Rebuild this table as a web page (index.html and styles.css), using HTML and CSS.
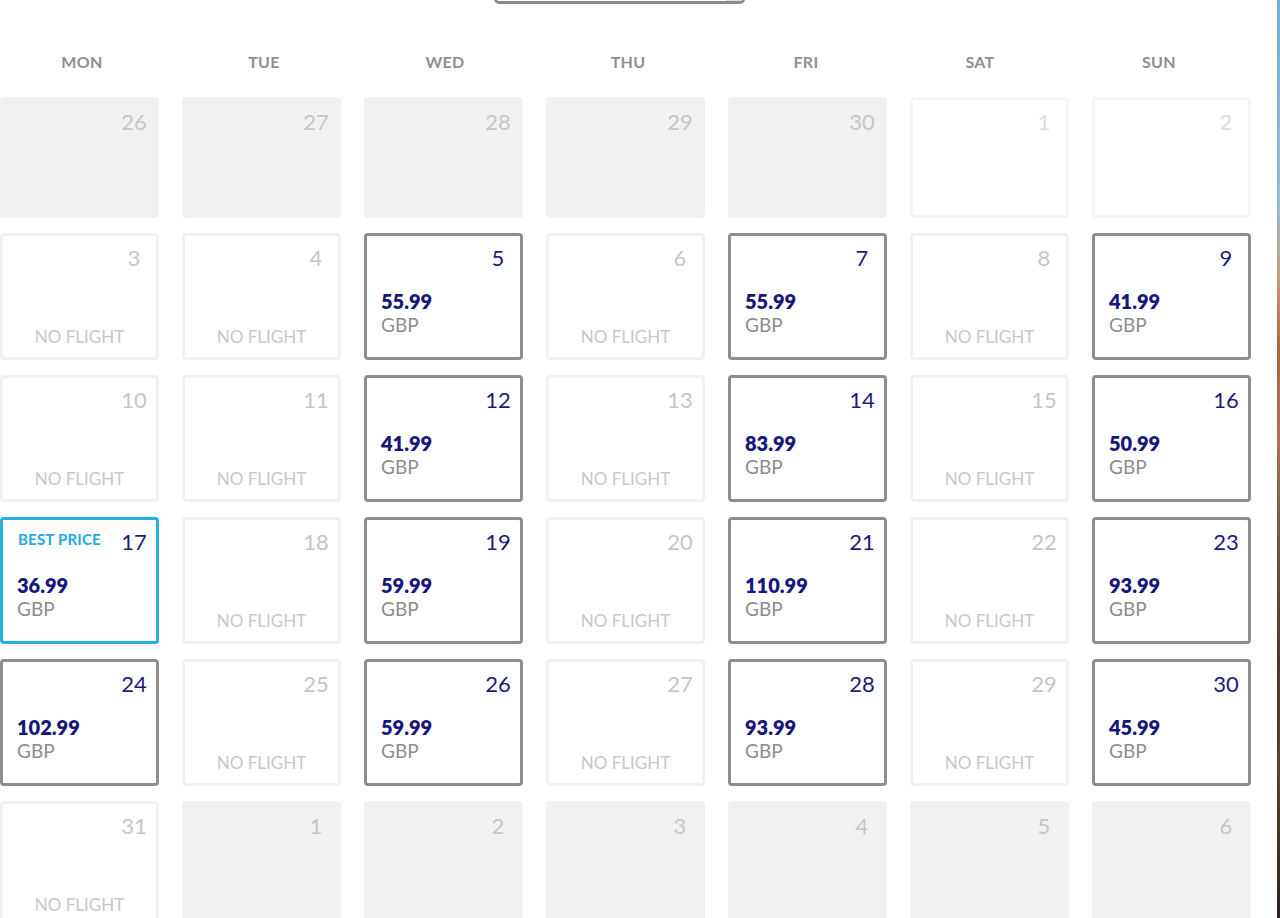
FILE: index.html
```html
<!DOCTYPE html>
<html lang="en">
<head>
<meta charset="utf-8">
<title>Fare calendar</title>
<link rel="stylesheet" href="styles.css">
</head>
<body>
<div class="page">
  <div class="panel">
    <div class="month-select"><span class="month-select-arrow"></span></div>
    <div class="weekdays">
      <div>MON</div><div>TUE</div><div>WED</div><div>THU</div><div>FRI</div><div>SAT</div><div>SUN</div>
    </div>
    <div class="calendar">
      <div class="cell outside"><div class="top"><span class="num">26</span></div></div>
      <div class="cell outside"><div class="top"><span class="num">27</span></div></div>
      <div class="cell outside"><div class="top"><span class="num">28</span></div></div>
      <div class="cell outside"><div class="top"><span class="num">29</span></div></div>
      <div class="cell outside"><div class="top"><span class="num">30</span></div></div>
      <div class="cell blank"><div class="top"><span class="num">1</span></div></div>
      <div class="cell blank"><div class="top"><span class="num">2</span></div></div>

      <div class="cell none"><div class="top"><span class="num">3</span></div><div class="nf">NO FLIGHT</div></div>
      <div class="cell none"><div class="top"><span class="num">4</span></div><div class="nf">NO FLIGHT</div></div>
      <div class="cell fare"><div class="top"><span class="num">5</span></div><div class="price">55.99</div><div class="cur">GBP</div></div>
      <div class="cell none"><div class="top"><span class="num">6</span></div><div class="nf">NO FLIGHT</div></div>
      <div class="cell fare"><div class="top"><span class="num">7</span></div><div class="price">55.99</div><div class="cur">GBP</div></div>
      <div class="cell none"><div class="top"><span class="num">8</span></div><div class="nf">NO FLIGHT</div></div>
      <div class="cell fare"><div class="top"><span class="num">9</span></div><div class="price">41.99</div><div class="cur">GBP</div></div>

      <div class="cell none"><div class="top"><span class="num">10</span></div><div class="nf">NO FLIGHT</div></div>
      <div class="cell none"><div class="top"><span class="num">11</span></div><div class="nf">NO FLIGHT</div></div>
      <div class="cell fare"><div class="top"><span class="num">12</span></div><div class="price">41.99</div><div class="cur">GBP</div></div>
      <div class="cell none"><div class="top"><span class="num">13</span></div><div class="nf">NO FLIGHT</div></div>
      <div class="cell fare"><div class="top"><span class="num">14</span></div><div class="price">83.99</div><div class="cur">GBP</div></div>
      <div class="cell none"><div class="top"><span class="num">15</span></div><div class="nf">NO FLIGHT</div></div>
      <div class="cell fare"><div class="top"><span class="num">16</span></div><div class="price">50.99</div><div class="cur">GBP</div></div>

      <div class="cell fare best"><div class="top"><span class="best-label">BEST PRICE</span><span class="num">17</span></div><div class="price">36.99</div><div class="cur">GBP</div></div>
      <div class="cell none"><div class="top"><span class="num">18</span></div><div class="nf">NO FLIGHT</div></div>
      <div class="cell fare"><div class="top"><span class="num">19</span></div><div class="price">59.99</div><div class="cur">GBP</div></div>
      <div class="cell none"><div class="top"><span class="num">20</span></div><div class="nf">NO FLIGHT</div></div>
      <div class="cell fare"><div class="top"><span class="num">21</span></div><div class="price">110.99</div><div class="cur">GBP</div></div>
      <div class="cell none"><div class="top"><span class="num">22</span></div><div class="nf">NO FLIGHT</div></div>
      <div class="cell fare"><div class="top"><span class="num">23</span></div><div class="price">93.99</div><div class="cur">GBP</div></div>

      <div class="cell fare"><div class="top"><span class="num">24</span></div><div class="price">102.99</div><div class="cur">GBP</div></div>
      <div class="cell none"><div class="top"><span class="num">25</span></div><div class="nf">NO FLIGHT</div></div>
      <div class="cell fare"><div class="top"><span class="num">26</span></div><div class="price">59.99</div><div class="cur">GBP</div></div>
      <div class="cell none"><div class="top"><span class="num">27</span></div><div class="nf">NO FLIGHT</div></div>
      <div class="cell fare"><div class="top"><span class="num">28</span></div><div class="price">93.99</div><div class="cur">GBP</div></div>
      <div class="cell none"><div class="top"><span class="num">29</span></div><div class="nf">NO FLIGHT</div></div>
      <div class="cell fare"><div class="top"><span class="num">30</span></div><div class="price">45.99</div><div class="cur">GBP</div></div>

      <div class="cell none"><div class="top"><span class="num">31</span></div><div class="nf">NO FLIGHT</div></div>
      <div class="cell outside"><div class="top"><span class="num">1</span></div></div>
      <div class="cell outside"><div class="top"><span class="num">2</span></div></div>
      <div class="cell outside"><div class="top"><span class="num">3</span></div></div>
      <div class="cell outside"><div class="top"><span class="num">4</span></div></div>
      <div class="cell outside"><div class="top"><span class="num">5</span></div></div>
      <div class="cell outside"><div class="top"><span class="num">6</span></div></div>
    </div>
  </div>
  <div class="photo-edge"></div>
</div>
</body>
</html>
```

FILE: styles.css
```css
html, body {
  margin: 0;
  padding: 0;
  height: 100%;
  overflow: hidden;
  background: #ffffff;
}

body {
  font-family: "Lato", "Open Sans", "Liberation Sans", sans-serif;
  color: #8c8c8c;
}

.page {
  display: flex;
  height: 918px;
}

.panel {
  flex: 1;
  background: #ffffff;
  box-shadow: 2px 0 3px rgba(0, 0, 0, 0.08);
  position: relative;
  z-index: 1;
}

.photo-edge {
  width: 3px;
  background: linear-gradient(180deg,
    #7fb3d8 0%, #9ec4dc 22%, #c9a88a 30%, #b9674a 38%,
    #a97b5e 48%, #6c5a4a 60%, #4d3d33 72%, #5a4636 84%, #2b2420 100%);
}

.month-select {
  margin-left: 494px;
  margin-top: -39px;
  width: 245px;
  height: 37px;
  border: 3px solid #8a8a8a;
  border-radius: 5px;
  position: relative;
}

.month-select-arrow {
  position: absolute;
  right: 2px;
  bottom: 0;
  width: 14px;
  height: 6px;
  background: #dddddd;
}

.weekdays {
  display: grid;
  grid-template-columns: 164px 200px 162px 204px 152px 196px 162px;
  margin-top: 48px;
  width: 1240px;
}

.weekdays div {
  text-align: center;
  font-weight: 700;
  font-size: 16px;
  line-height: 20px;
  letter-spacing: 0.3px;
  color: #8f8f8f;
}

.calendar {
  display: grid;
  grid-template-columns: repeat(7, 159px);
  grid-template-rows: 121px repeat(5, 127px);
  column-gap: 23px;
  row-gap: 15px;
  margin-top: 25px;
  width: 1252px;
}

.cell {
  box-sizing: border-box;
  border: 3px solid #f1f1f1;
  border-radius: 4px;
  padding: 9px 6px 10px 14px;
  display: flex;
  flex-direction: column;
  background: #ffffff;
}

.cell.outside {
  background: #f1f1f1;
  border-color: #f1f1f1;
}

.cell.blank {
  border-color: #f5f5f5;
}

.cell.fare {
  border-color: #8e8e8e;
}

.cell.best {
  border-color: #23b0e3;
}

.top {
  display: flex;
  justify-content: space-between;
  align-items: center;
  height: 26px;
}

.num {
  margin-left: auto;
  width: 32px;
  text-align: center;
  font-size: 22px;
  line-height: 26px;
  color: #c6c6c6;
}

.cell.blank .num {
  color: #dedede;
}

.cell.fare .num {
  color: #1b1b7e;
}

.best-label {
  font-size: 15px;
  font-weight: 700;
  color: #23a8df;
  line-height: 18px;
  margin-top: -7px;
  margin-left: 1px;
  letter-spacing: 0.2px;
}

.price {
  margin-top: 18px;
  font-size: 20px;
  font-weight: 800;
  line-height: 24px;
  color: #16167c;
}

.cur {
  font-size: 19px;
  line-height: 24px;
  color: #8d8d8d;
}

.nf {
  margin-top: auto;
  margin-left: -8px;
  text-align: center;
  font-size: 17px;
  line-height: 20px;
  color: #c8c8c8;
}
```
